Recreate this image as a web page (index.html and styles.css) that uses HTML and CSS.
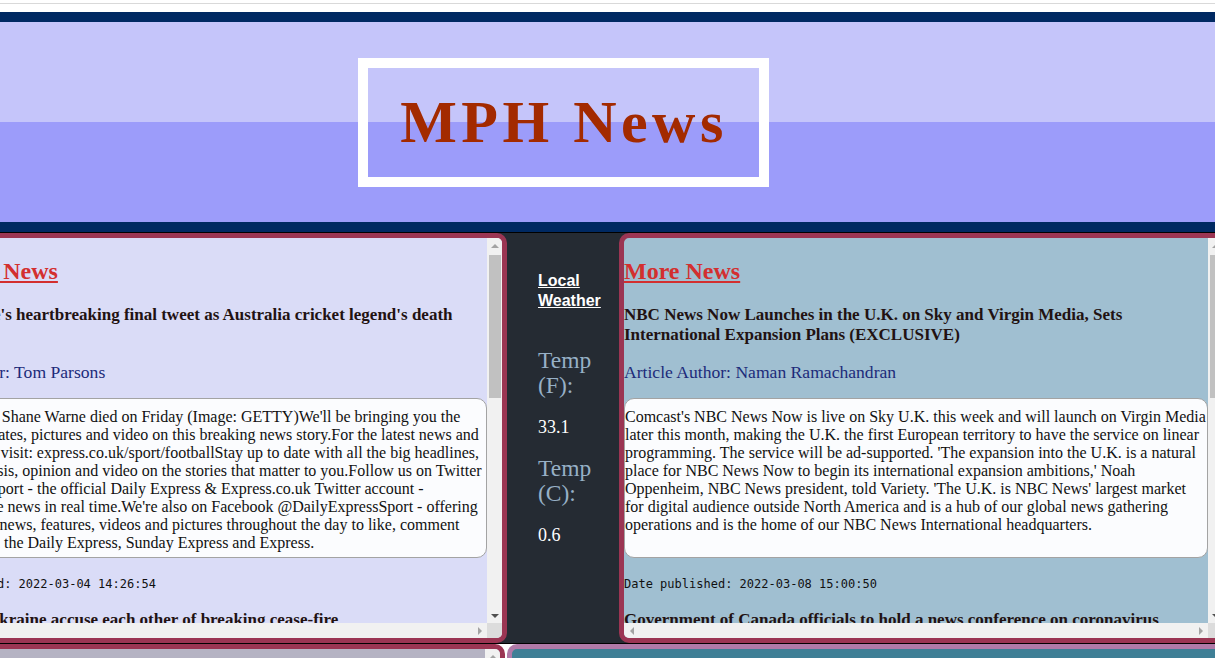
FILE: index.html
```html
<!DOCTYPE html>
<html lang="en">
<head>
<meta charset="utf-8">
<title>MPH News</title>
<link rel="stylesheet" href="styles.css">
</head>
<body>
<div class="topbar"></div>
<div class="page">
  <header class="masthead">
    <div class="titlebox"><h1 class="title">MPH News</h1></div>
  </header>
  <main class="row">
    <section class="panel panel-top">
      <div class="panel-body">
        <h2 class="panel-title"><a href="#">Breaking News</a></h2>
        <article class="story">
          <h3 class="headline">Shane Warne's heartbreaking final tweet as Australia cricket legend's death confirmed</h3>
          <p class="author">Article Author: Tom Parsons</p>
          <div class="summary"><p>Cricket legend Shane Warne died on Friday (Image: GETTY)We'll be bringing you the very latest updates, pictures and video on this breaking news story.For the latest news and breaking news visit: express.co.uk/sport/footballStay up to date with all the big headlines, pictures, analysis, opinion and video on the stories that matter to you.Follow us on Twitter @DExpress_Sport - the official Daily Express &amp; Express.co.uk Twitter account - covering&nbsp;all the news in real time.We're also on Facebook @DailyExpressSport - offering the best sports news, features, videos and pictures throughout the day to like, comment and share from the Daily Express, Sunday Express and Express.</p></div>
          <p class="date"><code>Date published: 2022-03-04 14:26:54</code></p>
        </article>
        <article class="story">
          <h3 class="headline">Russia and Ukraine accuse each other of breaking cease-fire</h3>
          <p class="author">Article Author: Associated Press</p>
          <div class="summary"><p>Russia and Ukraine accused each other on Saturday of violating a temporary cease-fire agreed to allow civilians to leave two besieged cities.</p></div>
          <p class="date"><code>Date published: 2022-03-05 11:42:17</code></p>
        </article>
      </div>
      <div class="sb-v">
        <span class="sb-btn"><i class="tri tri-up"></i></span>
        <span class="sb-thumb"></span>
        <span class="sb-fill"></span>
        <span class="sb-btn"><i class="tri tri-down"></i></span>
      </div>
      <div class="sb-h">
        <span class="sb-btn"><i class="tri tri-left"></i></span>
        <span class="sb-btn"><i class="tri tri-right"></i></span>
      </div>
      <div class="sb-corner"></div>
    </section>
    <aside class="weather">
      <h4 class="weather-title"><a href="#">Local Weather</a></h4>
      <h3 class="temp-label">Temp (F):</h3>
      <p class="temp-value">33.1</p>
      <h3 class="temp-label">Temp (C):</h3>
      <p class="temp-value">0.6</p>
    </aside>
    <section class="panel panel-more">
      <div class="panel-body">
        <h2 class="panel-title"><a href="#">More News</a></h2>
        <article class="story">
          <h3 class="headline">NBC News Now Launches in the U.K. on Sky and Virgin Media, Sets International Expansion Plans (EXCLUSIVE)</h3>
          <p class="author">Article Author: Naman Ramachandran</p>
          <div class="summary"><p>Comcast's NBC News Now is live on Sky U.K. this week and will launch on Virgin Media later this month, making the U.K. the first European territory to have the service on linear programming. The service will be ad-supported. 'The expansion into the U.K. is a natural place for NBC News Now to begin its international expansion ambitions,' Noah Oppenheim, NBC News president, told Variety. 'The U.K. is NBC News' largest market for digital audience outside North America and is a hub of our global news gathering operations and is the home of our NBC News International headquarters.</p></div>
          <p class="date"><code>Date published: 2022-03-08 15:00:50</code></p>
        </article>
        <article class="story">
          <h3 class="headline">Government of Canada officials to hold a news conference on coronavirus (COVID-19)</h3>
          <p class="author">Article Author: Public Health Agency of Canada</p>
          <div class="summary"><p>Government of Canada officials will hold a news conference to provide an update on the coronavirus disease (COVID-19) situation.</p></div>
          <p class="date"><code>Date published: 2022-03-08 10:30:00</code></p>
        </article>
      </div>
      <div class="sb-v">
        <span class="sb-btn"><i class="tri tri-up"></i></span>
        <span class="sb-thumb"></span>
        <span class="sb-fill"></span>
        <span class="sb-btn"><i class="tri tri-down"></i></span>
      </div>
      <div class="sb-h">
        <span class="sb-btn"><i class="tri tri-left"></i></span>
        <span class="sb-btn"><i class="tri tri-right"></i></span>
      </div>
      <div class="sb-corner"></div>
    </section>
  </main>
  <div class="row-lower">
    <section class="panel panel-gray">
      <div class="panel-body"></div>
      <div class="sb-v">
        <span class="sb-btn"><i class="tri tri-up"></i></span>
        <span class="sb-fill"></span>
      </div>
    </section>
    <section class="panel panel-teal">
      <div class="panel-body"></div>
    </section>
  </div>
</div>
</body>
</html>
```

FILE: styles.css
```css
html, body {
  margin: 0;
  padding: 0;
}

body {
  width: 1215px;
  height: 658px;
  overflow: hidden;
  background: #ffffff;
  font-family: "Liberation Serif", "Times New Roman", serif;
}

.topbar {
  margin-top: 3px;
  height: 8px;
  border-top: 1px solid #d9d9d9;
}

.page {
  width: 1330px;
  margin-left: -102px;
}

/* ---------- masthead ---------- */
.masthead {
  height: 200px;
  border-top: 10px solid #002962;
  border-bottom: 10px solid #002962;
  background: linear-gradient(#c5c5fa 0, #c5c5fa 50%, #9c9cfa 50%, #9c9cfa 100%);
  display: flex;
  align-items: center;
  justify-content: center;
}

.titlebox {
  width: 391px;
  height: 109px;
  border: 10px solid #ffffff;
  display: flex;
  align-items: center;
  justify-content: center;
}

.title {
  margin: 0;
  padding-left: 2px;
  font-family: "Liberation Serif", "Times New Roman", serif;
  font-weight: bold;
  font-size: 60px;
  letter-spacing: 4.5px;
  color: #a32a00;
}

/* ---------- main row ---------- */
.row {
  display: grid;
  grid-template-columns: 609px 112px 609px;
  height: 410px;
  border-top: 1px solid #000000;
  background: #252b33;
}

.panel {
  box-sizing: border-box;
  height: 410px;
  border: 5px solid #9b3553;
  border-radius: 10px;
  overflow: hidden;
  display: grid;
  grid-template-columns: 1fr 15px;
  grid-template-rows: 1fr 15px;
}

.panel-body {
  grid-column: 1;
  grid-row: 1;
  overflow: hidden;
  min-width: 0;
  min-height: 0;
}

.panel-top {
  background: #dadcf7;
}

.panel-more {
  background: #a0bfd1;
}

/* fake classic scrollbars */
.sb-v {
  grid-column: 2;
  grid-row: 1;
  display: flex;
  flex-direction: column;
  background: #f1f1f1;
  min-height: 0;
}

.sb-h {
  grid-column: 1;
  grid-row: 2;
  display: flex;
  justify-content: space-between;
  background: #f1f1f1;
}

.sb-corner {
  grid-column: 2;
  grid-row: 2;
  background: #dcdcdc;
}

.sb-btn {
  flex: 0 0 15px;
  width: 15px;
  height: 15px;
  display: flex;
  align-items: center;
  justify-content: center;
}

.sb-thumb {
  flex: 0 0 143px;
  margin: 2px 1px 0 2px;
  background: #c1c1c1;
}

.sb-fill {
  flex: 1 1 auto;
}

.tri {
  display: block;
  width: 0;
  height: 0;
  border-style: solid;
  border-color: transparent;
}

.tri-up {
  border-width: 0 4px 4px 4px;
  border-bottom-color: #a3a3a3;
}

.tri-down {
  border-width: 4px 4px 0 4px;
  border-top-color: #505050;
}

.tri-left {
  border-width: 4px 4px 4px 0;
  border-right-color: #a3a3a3;
}

.tri-right {
  border-width: 4px 0 4px 4px;
  border-left-color: #a3a3a3;
}

/* ---------- stories ---------- */
.panel-title {
  margin: 19.92px 0;
  font-size: 24px;
  font-weight: bold;
}

.panel-title a {
  color: #d32f2f;
}

.headline {
  margin: 17px 0;
  font-size: 17px;
  line-height: 20px;
  font-weight: bold;
  color: #221212;
}

.author {
  margin: 17px 0 16px;
  font-size: 17.6px;
  line-height: 20px;
  color: #1c2b7a;
}

.summary {
  box-sizing: border-box;
  height: 160px;
  border: 1px solid #a3a3a3;
  border-radius: 10px;
  background: #fbfcfe;
}

.summary p {
  margin: 9px 0 0;
  font-size: 16px;
  line-height: 18px;
  color: #111111;
}

.date {
  margin: 16px 0;
  font-size: 16px;
  line-height: 18px;
}

.date code {
  font-family: "DejaVu Sans Mono", "Liberation Mono", monospace;
  font-size: 12px;
  color: #111111;
}

/* ---------- weather ---------- */
.weather {
  padding: 0 0 0 31px;
  display: flex;
  flex-direction: column;
  overflow: hidden;
}

.weather-title {
  margin: 38px 0 0;
  font-family: "Liberation Sans", Arial, sans-serif;
  font-size: 16px;
  line-height: 20px;
  font-weight: bold;
}

.weather-title a {
  color: #ffffff;
}

.temp-label {
  margin: 37px 0 0;
  font-family: "Liberation Serif", "Times New Roman", serif;
  font-weight: normal;
  font-size: 23.5px;
  line-height: 25px;
  color: #97b0c6;
}

.temp-value {
  margin: 20px 0 0;
  font-family: "Liberation Serif", "Times New Roman", serif;
  font-size: 18px;
  line-height: 18px;
  color: #ffffff;
}

.temp-value + .temp-label {
  margin-top: 20px;
}

/* ---------- lower row ---------- */
.row-lower {
  display: grid;
  grid-template-columns: 607px 1fr;
  column-gap: 2px;
  height: 60px;
  border-top: 1px solid #000000;
  background: #ffffff;
}

.panel-gray {
  height: 60px;
  grid-template-rows: 1fr;
  background: #b5b3c3;
}

.panel-teal {
  height: 60px;
  grid-template-columns: 1fr;
  grid-template-rows: 1fr;
  border-color: #b07aa8;
  background: #3f7f96;
}
```
